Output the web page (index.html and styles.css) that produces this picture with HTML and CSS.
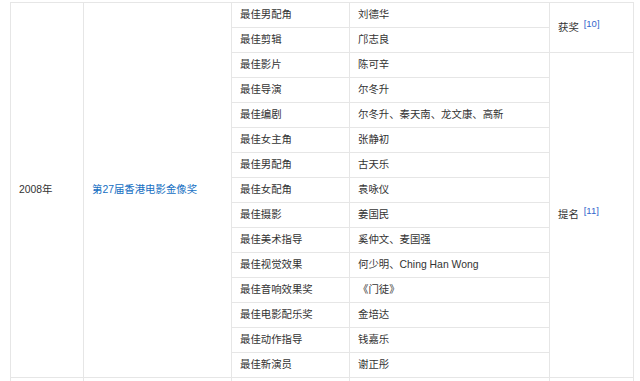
FILE: index.html
```html
<!DOCTYPE html>
<html lang="zh">
<head>
<meta charset="utf-8">
<link rel="stylesheet" href="styles.css">
</head>
<body>
<table class="awards">
  <colgroup>
    <col class="c-year"><col class="c-event"><col class="c-cat"><col class="c-name"><col class="c-result">
  </colgroup>
  <tbody>
    <tr>
      <td rowspan="15">2008年</td>
      <td rowspan="15"><a class="link" href="#">第27届香港电影金像奖</a></td>
      <td>最佳男配角</td><td>刘德华</td>
      <td rowspan="2">获奖 <sup class="ref">[10]</sup></td>
    </tr>
    <tr><td>最佳剪辑</td><td>邝志良</td></tr>
    <tr><td>最佳影片</td><td>陈可辛</td><td rowspan="13">提名 <sup class="ref">[11]</sup></td></tr>
    <tr><td>最佳导演</td><td>尔冬升</td></tr>
    <tr><td>最佳编剧</td><td>尔冬升、秦天南、龙文康、高新</td></tr>
    <tr><td>最佳女主角</td><td>张静初</td></tr>
    <tr><td>最佳男配角</td><td>古天乐</td></tr>
    <tr><td>最佳女配角</td><td>袁咏仪</td></tr>
    <tr><td>最佳摄影</td><td>姜国民</td></tr>
    <tr><td>最佳美术指导</td><td>奚仲文、麦国强</td></tr>
    <tr><td>最佳视觉效果</td><td>何少明、Ching Han Wong</td></tr>
    <tr><td>最佳音响效果奖</td><td>《门徒》</td></tr>
    <tr><td>最佳电影配乐奖</td><td>金培达</td></tr>
    <tr><td>最佳动作指导</td><td>钱嘉乐</td></tr>
    <tr><td>最佳新演员</td><td>谢正彤</td></tr>
    <tr class="next"><td></td><td></td><td></td><td></td><td></td></tr>
  </tbody>
</table>
</body>
</html>
```
FILE: styles.css
```css
html, body {
  margin: 0;
  padding: 0;
  background: #fff;
}
html {
  height: 381px;
  overflow: hidden;
}
body {
  font-family: "Liberation Sans", "Noto Sans CJK SC", sans-serif;
  font-size: 10.4px;
  color: #333;
}
.awards {
  border-collapse: collapse;
  table-layout: fixed;
  width: 623px;
  margin: 2px 0 0 10px;
}
.c-year { width: 73px; }
.c-event { width: 148px; }
.c-cat { width: 118px; }
.c-name { width: 200px; }
.c-result { width: 84px; }
.awards td {
  border: 1px solid #e6e6e6;
  height: 24px;
  padding: 0 0 0 8px;
  line-height: 24px;
  vertical-align: middle;
  white-space: nowrap;
}
.link {
  color: #136ec2;
  text-decoration: none;
}
.ref {
  color: #3366cc;
  font-size: 9.5px;
  vertical-align: 4px;
  line-height: 0;
  margin-left: 2px;
}
```
